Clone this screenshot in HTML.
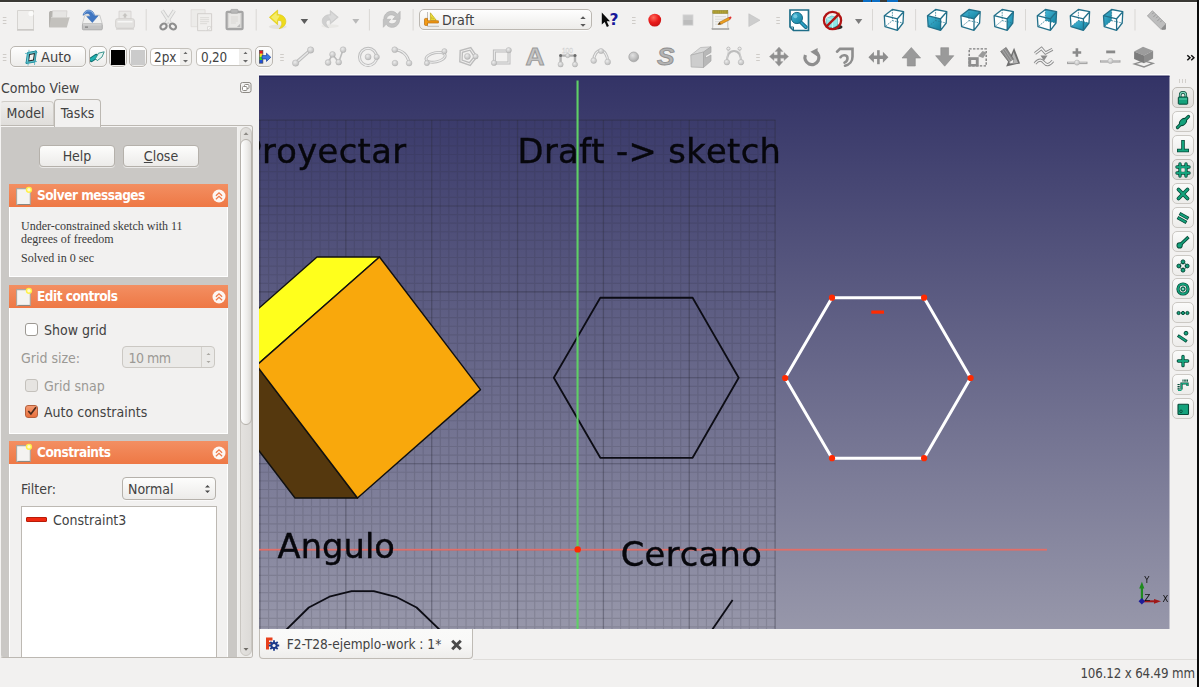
<!DOCTYPE html>
<html><head><meta charset="utf-8"><title>FreeCAD</title>
<style>
html,body{margin:0;padding:0}
body{width:1199px;height:687px;overflow:hidden;background:#f2f1f0;position:relative;font-family:"DejaVu Sans Condensed","DejaVu Sans","Liberation Sans",sans-serif;font-size:13px;color:#3c3c3c}
.abs{position:absolute}
#topbar{left:0;top:0;width:1199px;height:3px;background:linear-gradient(#3a3935 0,#3a3935 50%,#8a8986 62%,#fbfbfa 75%,#f8f7f6 100%)}
#rightedge{left:1197px;top:0;width:2px;height:687px;background:#0c0c0c}
#view{left:259px;top:75px;width:911px;height:554px;will-change:transform}
/*TBs*/
.tbtn{position:absolute;box-sizing:border-box;border:1px solid #bbb7b1;border-radius:5px;background:linear-gradient(#fefefe,#edecea);box-shadow:0 1px 0 rgba(255,255,255,.7)}
.spin{position:absolute;box-sizing:border-box;border:1px solid #c4c1bb;border-radius:4px;background:linear-gradient(90deg,#fff 0,#fff var(--w),#efeeec var(--w),#f3f2f0 100%);height:18px;top:48px}
/*TBe*/

.ui{font-family:"DejaVu Sans Condensed","DejaVu Sans","Liberation Sans",sans-serif;font-size:14px;color:#424242;white-space:nowrap;line-height:16px}
#lp{left:0;top:76px;width:259px;height:584px}
.tab{position:absolute;box-sizing:border-box;border:1px solid #b9b5af;border-bottom:none;border-radius:4px 4px 0 0;text-align:center}
#frame{position:absolute;left:0;top:49px;width:253px;height:533px;box-sizing:border-box;border:1px solid #bcb8b2;border-left-color:#f4f3f2;border-radius:0 3px 3px 3px;background:#f2f1f0;overflow:hidden}
#scroll{position:absolute;left:0;top:0;width:236px;height:531px;background:#cac8c5;overflow:hidden;box-shadow:inset 0 1px 0 #f6f5f4}
.btn{position:absolute;box-sizing:border-box;border:1px solid #b5b1ab;border-radius:4px;background:linear-gradient(#fdfdfc,#ecebe9);text-align:center;box-shadow:0 1px 0 rgba(255,255,255,.6)}
.hdr{position:absolute;left:8px;width:219px;height:23px;background:linear-gradient(#f38f62,#ee7845);color:#fff;font-weight:bold}
.hdr span{position:absolute;left:28px;top:3px;font-size:13.5px;letter-spacing:-.5px}
.box{position:absolute;left:8px;width:219px;box-sizing:border-box;background:#f2f1f0;border:1px solid #fff;border-top:none}
.chk{position:absolute;left:24px;width:13px;height:13px;box-sizing:border-box;border:1px solid #9d9993;border-radius:3px;background:#fff}
.ser{font-family:"Liberation Serif","DejaVu Serif",serif;font-size:12px;color:#3a3a3a;position:absolute;left:20px;white-space:nowrap;line-height:13px}
.lbl{position:absolute}
#scroll .lbl{margin-top:1px}


.rb{position:absolute;left:1172px;width:22px;height:21px;box-sizing:border-box;border:1px solid #cbc8c3;border-radius:5px;background:linear-gradient(#fbfbfa,#edecea)}
.rb svg{position:absolute;left:2px;top:2px}

</style></head><body>
<div id="topbar" class="abs"></div><div class="abs" style="left:863px;top:0;width:35px;height:1.500px;background:linear-gradient(90deg,#0b6ec4 0,#0b6ec4 22%,#3a3935 22%,#3a3935 26%,#0b6ec4 26%,#0b6ec4 48%,#3a3935 48%,#3a3935 68%,#0b6ec4 68%)"></div>
<!--TB1-->
<div class="tbtn" style="left:419px;top:9px;width:172.5px;height:21px"></div>
<div class="abs ui" style="left:442px;top:12px;font-size:14.2px">Draft</div>
<svg class="abs" style="left:578px;top:13px" width="10" height="16" viewBox="0 0 10 16"><path d="M2.3 6L5 3.3 7.7 6zM2.3 11L5 13.7 7.7 11z" fill="#5a5a5a"/></svg>
<div class="tbtn" style="left:10px;top:46px;width:76px;height:21px"></div>
<div class="abs ui" style="left:41px;top:49px;font-size:14.5px">Auto</div>
<svg class="abs" style="left:24px;top:48.5px" width="16" height="18" viewBox="0 0 16 18"><path d="M3.5 3.5L12.5 2 11 13 2 14.5z" fill="#7fd6de" stroke="#1f8a98" stroke-width="1"/><path d="M5.5 5.5L10.5 4.5 9.5 11 4.5 12z" fill="#f4f3f1" stroke="#222" stroke-width="1.1"/><path d="M5 .8L4 16.5M13.5 3.5L1 4.5M11.5 1L10.5 16M13 12.5L1.5 13.5" stroke="#3aa8b8" stroke-width=".7"/></svg>
<div class="tbtn" style="left:88.5px;top:46px;width:18px;height:21px"></div>
<svg class="abs" style="left:90px;top:50px" width="15" height="14" viewBox="0 0 15 14"><path d="M1.5 9.5L6 6.5" stroke="#0e6e6e" stroke-width="5" stroke-linecap="round"/><path d="M1.5 9.5L6 6.5" stroke="#1fb0b0" stroke-width="3" stroke-linecap="round"/><path d="M5.5 8.5l3-5.3 5.7-1.4-2.2 5.2-4.8 3.7z" fill="#e4f4f0" stroke="#2a8a84" stroke-width=".9"/></svg>
<div class="tbtn" style="left:109px;top:46px;width:17.5px;height:21px"></div><div class="abs" style="left:111px;top:49.5px;width:14px;height:15px;background:#000"></div>
<div class="tbtn" style="left:129px;top:46px;width:17.5px;height:21px"></div><div class="abs" style="left:131px;top:49.5px;width:14px;height:15px;background:#cbcbcb"></div>
<div class="spin" style="left:149.5px;width:42.5px;--w:29px"></div>
<div class="abs ui" style="left:154px;top:49.5px;font-size:13.4px">2px</div>
<svg class="abs" style="left:181px;top:49px" width="9" height="16" viewBox="0 0 9 16"><path d="M2.5 5L4.5 2.8 6.5 5zM2 11h5L4.5 13.6z" fill="#6a6a6a"/></svg>
<div class="spin" style="left:195.5px;width:56.5px;--w:42px"></div>
<div class="abs ui" style="left:201px;top:49.5px;font-size:13.4px;letter-spacing:-.2px">0,20</div>
<svg class="abs" style="left:241px;top:49px" width="9" height="16" viewBox="0 0 9 16"><path d="M2.5 5L4.5 2.8 6.5 5zM2 11h5L4.5 13.6z" fill="#6a6a6a"/></svg>
<div class="tbtn" style="left:255px;top:46px;width:17.5px;height:21px"></div>
<svg class="abs" style="left:258px;top:50px" width="14" height="14" viewBox="0 0 14 14"><rect x="1.3" y=".5" width="3.6" height="3.3" fill="#e81c1c"/><rect x="1.3" y="3.8" width="3.6" height="3" fill="#f4e020"/><rect x="1.3" y="6.8" width="3.6" height="3.2" fill="#28d828"/><rect x="1.3" y="10" width="3.6" height="3.2" fill="#2050d8"/><rect x="1.3" y=".5" width="3.6" height="12.7" fill="none" stroke="#444" stroke-width=".6"/><path d="M4 5.6h4.5V3.2L12.8 7.3 8.5 11.4V9H4z" fill="#3a78e0" stroke="#1a3e98" stroke-width=".7"/></svg>
<svg class="abs" style="left:0;top:0" width="1199" height="75" viewBox="0 0 1199 75"><path d="M2.8 17.5h3.6M2.8 20.5h3.6M2.8 23.5h3.6" stroke="#cfccc8" stroke-width="1"/>
<path d="M632 17.5h3.6M632 20.5h3.6M632 23.5h3.6" stroke="#cfccc8" stroke-width="1"/>
<path d="M776.3 17.5h3.6M776.3 20.5h3.6M776.3 23.5h3.6" stroke="#cfccc8" stroke-width="1"/>
<path d="M2.8 54.5h3.6M2.8 57.5h3.6M2.8 60.5h3.6" stroke="#cfccc8" stroke-width="1"/>
<path d="M280.2 54.5h3.6M280.2 57.5h3.6M280.2 60.5h3.6" stroke="#cfccc8" stroke-width="1"/>
<path d="M756.2 54.5h3.6M756.2 57.5h3.6M756.2 60.5h3.6" stroke="#cfccc8" stroke-width="1"/>
<path d="M146.2 9v21.5" stroke="#d9d7d4" stroke-width="1"/>
<path d="M256.2 9v21.5" stroke="#d9d7d4" stroke-width="1"/>
<path d="M369.4 9v21.5" stroke="#d9d7d4" stroke-width="1"/>
<path d="M413.1 9v21.5" stroke="#d9d7d4" stroke-width="1"/>
<path d="M872.5 9v21.5" stroke="#d9d7d4" stroke-width="1"/>
<path d="M915.6 9v21.5" stroke="#d9d7d4" stroke-width="1"/>
<path d="M1025.5 9v21.5" stroke="#d9d7d4" stroke-width="1"/>
<path d="M1135 9v21.5" stroke="#d9d7d4" stroke-width="1"/>
<g transform="translate(17,10)"><path d="M.5 .5h16v19H.5z" fill="#efeeec" stroke="#d6d4d1"/><path d="M0 20h17" stroke="#c4c2be" stroke-width="1.2"/><circle cx="14" cy="3.5" r="2.6" fill="#fbfbfa"/></g>
<g transform="translate(48,10)"><path d="M1 2.5l1-1.5h5l1 1.5h10V17H1z" fill="#b4b2ae"/><path d="M4.5 .8h14.5l-.8 9H4z" fill="#e6e5e3" stroke="#c9c7c4" stroke-width=".6"/><path d="M3 7.5h18.6L18.8 17.4H1.2z" fill="#c3c1bd"/><path d="M3 7.5h18.6" stroke="#d6d4d1" stroke-width=".8"/></g>
<g transform="translate(82,9.5)"><path d="M2.85 5.7H17.75L20.3 14.5H.3z" fill="#f1f1f0" stroke="#c2c2c0" stroke-width=".8"/><rect x=".4" y="14.5" width="19.9" height="5.8" rx="1" fill="#c3c3c3" stroke="#a2a2a2" stroke-width=".8"/><path d="M1 15.3h18.6" stroke="#e4e4e4" stroke-width=".8"/><path d="M3 17.6h3" stroke="#7c7c7c" stroke-width="1.2"/><path d="M1 6C1.5 2.5 4.5 .3 7 .5 10.5 .8 12.3 3.5 12.6 6.4L16.2 6.2 10.3 13.1 4.7 7 8.3 6.7C8 4.8 6.8 3.9 5.2 4 3.5 4.1 2 5 1 6z" fill="#3f76c2" stroke="#3468b0" stroke-width=".5"/><path d="M2 4.5C3.2 2.2 5.2 1.2 7 1.3 9.5 1.5 11 3 11.6 5" fill="none" stroke="#8fb4e2" stroke-width="1"/></g>
<g transform="translate(115,10.7)"><path d="M4 .5h12v8H4z" fill="#e9e8e6" stroke="#d3d1ce" stroke-width=".8"/><path d="M10 2.2l2.6 2.8h-1.4v2h-2.4v-2h-1.4z" fill="#c6c4c1"/><rect x=".6" y="8" width="18.8" height="9.5" rx="2" fill="#e3e2e0" stroke="#cfcdca" stroke-width=".8"/><path d="M2.5 11h15" stroke="#f6f6f5" stroke-width="1.6"/><path d="M1 18.3h18" stroke="#c9c7c4" stroke-width="1"/></g>
<g transform="translate(158.7,10)"><path d="M3.5 .5L11.5 13" stroke="#c9c9c9" stroke-width="3.6"/><path d="M15.5 .5L7.5 13" stroke="#c9c9c9" stroke-width="3.6"/><path d="M3.5 .5L11.5 13" stroke="#ececea" stroke-width="2.2"/><path d="M15.5 .5L7.5 13" stroke="#ececea" stroke-width="2.2"/><ellipse cx="4.8" cy="16.5" rx="3.3" ry="2.7" transform="rotate(-35 4.8 16.5)" fill="none" stroke="#8e8e8e" stroke-width="2.2"/><ellipse cx="14.2" cy="16.5" rx="3.3" ry="2.7" transform="rotate(35 14.2 16.5)" fill="none" stroke="#8e8e8e" stroke-width="2.2"/></g>
<g transform="translate(190.6,9.2)"><path d="M.5 .5h14v17H.5z" fill="#ecebe9" stroke="#dddbd8" stroke-width=".8"/><path d="M7 4.5h14v17h-3l-3-.0H7z" fill="#f0efed" stroke="#cfcdca" stroke-width=".9"/><path d="M9.5 8.5h9M9.5 10.5h9M9.5 12.5h9M9.5 14.5h7" stroke="#dcdad7" stroke-width="1"/><path d="M17 21.5l4-4h-4z" fill="#fdfdfc" stroke="#cfcdca" stroke-width=".7"/></g>
<g transform="translate(225.4,9)"><rect x="1.2" y="2.8" width="16" height="17.4" rx="1" fill="#d9d8d6" stroke="#a5a5a5" stroke-width="2.2"/><rect x="3.8" y="5" width="10.8" height="13" fill="#e9e8e6"/><path d="M5.5 8h7M5.5 10h7M5.5 12h7M5.5 14h5" stroke="#dad8d5" stroke-width="1"/><rect x="5.3" y=".4" width="7.4" height="3.8" rx="1" fill="#b8b8b8" stroke="#a0a0a0" stroke-width=".7"/><path d="M11.5 18l3.2-3.2v3.2z" fill="#bdbdbd"/></g>
<g transform="translate(269.4,10.2)"><ellipse cx="8.4" cy="16.6" rx="9" ry="2.2" fill="#e4e2df"/><path d="M0 7.1L8.2 -.1V4.3C13.5 4.3 16.4 7.5 16.4 11.5 16.4 14.8 13.5 17.5 9.8 18.5 11.8 16.5 12.6 14.5 12.4 12.6 12.2 10.8 10.8 10.1 8.2 10.1V14.5z" fill="#eedb1c" stroke="#dcc818" stroke-width=".7"/><path d="M1.6 7.1L7.3 2V5.3C8.5 5.2 9.5 5.3 10.4 5.5L8 9.3 7.3 12.3z" fill="#f6ee78" opacity=".85"/></g>
<path d="M300.6 19h7.5l-3.75 5z" fill="#5c5c5c"/>
<g transform="translate(338.3,10.6) scale(-.98,.93)"><ellipse cx="8.4" cy="16.6" rx="9" ry="2" fill="#e9e8e5"/><path d="M0 7.1L8.2 -.1V4.3C13.5 4.3 16.4 7.5 16.4 11.5 16.4 14.8 13.5 17.5 9.8 18.5 11.8 16.5 12.6 14.5 12.4 12.6 12.2 10.8 10.8 10.1 8.2 10.1V14.5z" fill="#cfcfcf" stroke="#c4c4c4" stroke-width=".6"/><path d="M1.6 7.1L7.3 2V5.3C8.5 5.2 9.5 5.3 10.4 5.5L8 9.3 7.3 12.3z" fill="#dcdcdc" opacity=".85"/></g>
<path d="M352.3 19h7l-3.5 4.7z" fill="#b9b9b9"/>
<g transform="translate(382.3,9.7) scale(1.02,1.1)"><path d="M1.5 8C2 3.5 6 1 10 1.5c2 .3 3.6 1.3 4.8 2.7L17.5 1.5V8.8h-7.3l2.5-2.5C11 4.5 7.5 4 5.5 6c-.7.7-1 1.3-1.2 2z" fill="#c3c3c3" stroke="#b2b2b2" stroke-width=".6"/><path d="M17 9.5c-.5 4.5-4.5 7-8.5 6.5-2-.3-3.6-1.3-4.8-2.7L1 16V8.7h7.3L5.8 11.2c1.7 1.8 5.2 2.3 7.2.3.7-.7 1-1.3 1.2-2z" fill="#c3c3c3" stroke="#b2b2b2" stroke-width=".6"/></g>
<g transform="translate(424,11.7)"><path d="M3.5 .3V14.6H15" fill="none" stroke="#b9b7b3" stroke-width=".9"/><path d="M6.4 1.1V8.6H12.3z" fill="#f2e23c" stroke="#b8a414" stroke-width=".7"/><path d="M7.8 5v2.4M9.2 6.3v1.1" stroke="#a89410" stroke-width=".6"/><path d="M.5 7.5C.5 6.9 1 6.7 1.5 6.7H3.5V9.1H14.4V11.3H3.5V13.7H1.5C1 13.7 .5 13.5 .5 12.9z" fill="#f39a14" stroke="#b86a08" stroke-width=".7"/></g>
<g transform="translate(601.5,12.6)"><path d="M.3 0l8.2 8.6H5.2l2.2 4.8-2 .9-2.2-4.8L.3 12z" fill="#0a0a0a"/></g>
<text x="609.6" y="25" style="font-family:'DejaVu Sans','Liberation Sans',sans-serif;font-weight:bold;font-size:15.5px;fill:#18189a">?</text>
<defs><radialGradient id="rec" cx=".4" cy=".3" r=".8"><stop offset="0" stop-color="#ff6a5a"/><stop offset=".5" stop-color="#ea1c1c"/><stop offset="1" stop-color="#c01010"/></radialGradient><linearGradient id="cf" x1="0" y1="0" x2="1" y2="1"><stop offset="0" stop-color="#46b8d8"/><stop offset="1" stop-color="#12809e"/></linearGradient><radialGradient id="ball" cx=".4" cy=".35" r=".75"><stop offset="0" stop-color="#ececec"/><stop offset=".7" stop-color="#c6c6c6"/><stop offset="1" stop-color="#a8a8a8"/></radialGradient><radialGradient id="ball2" cx=".4" cy=".35" r=".75"><stop offset="0" stop-color="#e2e2e2"/><stop offset=".6" stop-color="#bcbcbc"/><stop offset="1" stop-color="#9c9c9c"/></radialGradient></defs>
<circle cx="654.75" cy="20.1" r="6.4" fill="url(#rec)"/>
<rect x="683" y="14.9" width="10" height="10.3" fill="#c9c9c9" stroke="#d6d6d6" stroke-width=".8"/><rect x="683.5" y="20" width="9" height="4.7" fill="#bcbcbc"/>
<g transform="translate(711,10.2)"><path d="M1.8 1.5h15v15.5l1 1.8H.8l1-1.8z" fill="#f3f3f2" stroke="#b4b4b2" stroke-width=".8"/><rect x="1.8" y=".3" width="15" height="2.8" fill="#b8a838" stroke="#8e8024" stroke-width=".6"/><path d="M3.2 .3v2.8M5 .3v2.8M6.8 .3v2.8M8.6 .3v2.8M10.4 .3v2.8M12.2 .3v2.8M14 .3v2.8M15.6 .3v2.8" stroke="#8e8024" stroke-width=".5"/><path d="M4 6.5h11M4 9h11M4 11.5h11M4 14h8" stroke="#d2d2d0" stroke-width=".8"/><path d="M.8 18.8h17.4" stroke="#9a9a98" stroke-width="1.2"/><path d="M7 14.3l1.6-2.3L17.8 7.2l1.2 2.1L9.8 14.1z" fill="#f0a020" stroke="#a86808" stroke-width=".6"/><path d="M17.8 7.2l1.5-.8c.8-.3 1.6 1 .9 1.6l-1.2 1.3z" fill="#e03030"/><path d="M7 14.3l1.6-2.3 1.2 2.1z" fill="#3a3a3a"/></g>
<path d="M748.8 13.8L760 20.2l-11.2 6.3z" fill="#cdcdcd" stroke="#c0c0c0" stroke-width=".6"/>
<g transform="translate(789,9)"><path d="M1 1h18.5v20.5H4.5L1 18z" fill="#fff" stroke="#1f6e88" stroke-width="1.7"/><path d="M1 18h3.5v3.5" fill="none" stroke="#1f6e88" stroke-width="1"/><path d="M11 12.5l5.8 5.6" stroke="#176a86" stroke-width="3.8" stroke-linecap="round"/><path d="M11 12.5l5.8 5.6" stroke="#2aa0c4" stroke-width="2" stroke-linecap="round"/><circle cx="7.9" cy="9" r="5.6" fill="url(#cf)" stroke="#176a86" stroke-width="1"/><circle cx="6.3" cy="7.2" r="2" fill="#8fd8ec" opacity=".7"/></g>
<g transform="translate(822.5,10.5)"><ellipse cx="14" cy="16.5" rx="6" ry="2.5" fill="#2a2a2a"/><path d="M4 8l5-2.5 6 1.5v8l-5 2.8L4 15z" fill="#8fe6e6" stroke="#4fb8c0" stroke-width=".6"/><path d="M4 8l6 1.8 5-2.8M10 9.8v8" fill="none" stroke="#c8f6f6" stroke-width=".8"/><path d="M11 8.5L16.2 1.8l1.3 1L12.3 9.5z" fill="#f4dc3c" stroke="#b89a14" stroke-width=".4"/><circle cx="10" cy="10" r="8.6" fill="none" stroke="#b01414" stroke-width="2.3"/><path d="M3.9 16.1L16.1 3.9" stroke="#b01414" stroke-width="2.3"/></g>
<path d="M855 19h7.3l-3.65 5z" fill="#7c7c7c"/>
<g transform="translate(884,9)"><polygon points="0.3,6.7 8.4,0.5 19.6,2.7 19,14 13.4,21.4 1,17.7" fill="#fff"/><path d="M8.4 0.5V11.6L1 17.7M8.4 11.6L19 14" fill="none" stroke="#2a7892" stroke-width=".8" stroke-dasharray="1.6 1"/><path d="M0.3,6.7L8.4,0.5L19.6,2.7L13.4,9.8zM0.3,6.7L1,17.7L13.4,21.4L13.4,9.8M13.4,21.4L19,14L19.6,2.7" fill="none" stroke="#22708a" stroke-width="1.3" stroke-linejoin="round"/></g>
<g transform="translate(927.2,9)"><polygon points="0.3,6.7 8.4,0.5 19.6,2.7 19,14 13.4,21.4 1,17.7" fill="#fff"/><polygon points="0.3,6.7 13.4,9.8 13.4,21.4 1,17.7" fill="url(#cf)"/><path d="M8.4 0.5V11.6L1 17.7M8.4 11.6L19 14" fill="none" stroke="#2a7892" stroke-width=".8" stroke-dasharray="1.6 1"/><path d="M0.3,6.7L8.4,0.5L19.6,2.7L13.4,9.8zM0.3,6.7L1,17.7L13.4,21.4L13.4,9.8M13.4,21.4L19,14L19.6,2.7" fill="none" stroke="#22708a" stroke-width="1.3" stroke-linejoin="round"/></g>
<g transform="translate(960.6,9)"><polygon points="0.3,6.7 8.4,0.5 19.6,2.7 19,14 13.4,21.4 1,17.7" fill="#fff"/><polygon points="0.3,6.7 8.4,0.5 19.6,2.7 13.4,9.8" fill="url(#cf)"/><path d="M8.4 0.5V11.6L1 17.7M8.4 11.6L19 14" fill="none" stroke="#2a7892" stroke-width=".8" stroke-dasharray="1.6 1"/><path d="M0.3,6.7L8.4,0.5L19.6,2.7L13.4,9.8zM0.3,6.7L1,17.7L13.4,21.4L13.4,9.8M13.4,21.4L19,14L19.6,2.7" fill="none" stroke="#22708a" stroke-width="1.3" stroke-linejoin="round"/></g>
<g transform="translate(993.8,9)"><polygon points="0.3,6.7 8.4,0.5 19.6,2.7 19,14 13.4,21.4 1,17.7" fill="#fff"/><polygon points="13.4,9.8 19.6,2.7 19,14 13.4,21.4" fill="url(#cf)"/><path d="M8.4 0.5V11.6L1 17.7M8.4 11.6L19 14" fill="none" stroke="#2a7892" stroke-width=".8" stroke-dasharray="1.6 1"/><path d="M0.3,6.7L8.4,0.5L19.6,2.7L13.4,9.8zM0.3,6.7L1,17.7L13.4,21.4L13.4,9.8M13.4,21.4L19,14L19.6,2.7" fill="none" stroke="#22708a" stroke-width="1.3" stroke-linejoin="round"/></g>
<g transform="translate(1037,9)"><polygon points="0.3,6.7 8.4,0.5 19.6,2.7 19,14 13.4,21.4 1,17.7" fill="#fff"/><polygon points="8.4,0.5 19.6,2.7 19,14 8.4,11.6" fill="url(#cf)"/><path d="M8.4 0.5V11.6L1 17.7M8.4 11.6L19 14" fill="none" stroke="#2a7892" stroke-width=".8" stroke-dasharray="1.6 1"/><path d="M0.3,6.7L8.4,0.5L19.6,2.7L13.4,9.8zM0.3,6.7L1,17.7L13.4,21.4L13.4,9.8M13.4,21.4L19,14L19.6,2.7" fill="none" stroke="#22708a" stroke-width="1.3" stroke-linejoin="round"/></g>
<g transform="translate(1070,9)"><polygon points="0.3,6.7 8.4,0.5 19.6,2.7 19,14 13.4,21.4 1,17.7" fill="#fff"/><polygon points="1,17.7 13.4,21.4 19,14 8.4,11.6" fill="url(#cf)"/><path d="M8.4 0.5V11.6L1 17.7M8.4 11.6L19 14" fill="none" stroke="#2a7892" stroke-width=".8" stroke-dasharray="1.6 1"/><path d="M0.3,6.7L8.4,0.5L19.6,2.7L13.4,9.8zM0.3,6.7L1,17.7L13.4,21.4L13.4,9.8M13.4,21.4L19,14L19.6,2.7" fill="none" stroke="#22708a" stroke-width="1.3" stroke-linejoin="round"/></g>
<g transform="translate(1103.2,9)"><polygon points="0.3,6.7 8.4,0.5 19.6,2.7 19,14 13.4,21.4 1,17.7" fill="#fff"/><polygon points="0.3,6.7 8.4,0.5 8.4,11.6 1,17.7" fill="url(#cf)"/><path d="M8.4 0.5V11.6L1 17.7M8.4 11.6L19 14" fill="none" stroke="#2a7892" stroke-width=".8" stroke-dasharray="1.6 1"/><path d="M0.3,6.7L8.4,0.5L19.6,2.7L13.4,9.8zM0.3,6.7L1,17.7L13.4,21.4L13.4,9.8M13.4,21.4L19,14L19.6,2.7" fill="none" stroke="#22708a" stroke-width="1.3" stroke-linejoin="round"/></g>
<g transform="translate(1146.9,10.4)"><path d="M.5 5.5L5.5 .3 19 13.5v5.5l-1.8.6z" fill="#a9a9a9"/><path d="M.5 5.5L5.5 .3 19 13.5l-5 5.3z" fill="#bdbdbd" stroke="#9a9a9a" stroke-width=".6"/><path d="M14 18.8l5-5.3v5l-3.2 1.1z" fill="#8c8c8c"/><path d="M7 2l-1.7 1.8M9 4l-2.6 2.7M11 6l-1.7 1.8M13 8l-2.6 2.7M15 10l-1.7 1.8" stroke="#8a8a8a" stroke-width=".7"/></g>
<path d="M295.6 63.1L310.6 50" stroke="#bcbcbc" stroke-width="3.4"/><path d="M295.6 63.1L310.6 50" stroke="#e6e6e6" stroke-width="1.4"/><circle cx="295.6" cy="63.1" r="3.2" fill="url(#ball)" stroke="#b4b4b4" stroke-width=".5"/><circle cx="310.6" cy="50" r="3.2" fill="url(#ball)" stroke="#b4b4b4" stroke-width=".5"/>
<path d="M328.1 62.5L332.5 54.4 338.7 62.2 343.1 49.7" fill="none" stroke="#bcbcbc" stroke-width="1.6"/><circle cx="328.1" cy="62.5" r="2.9" fill="url(#ball)" stroke="#b4b4b4" stroke-width=".5"/><circle cx="332.5" cy="54.4" r="2.9" fill="url(#ball)" stroke="#b4b4b4" stroke-width=".5"/><circle cx="338.7" cy="62.2" r="2.9" fill="url(#ball)" stroke="#b4b4b4" stroke-width=".5"/><circle cx="343.1" cy="49.7" r="2.9" fill="url(#ball)" stroke="#b4b4b4" stroke-width=".5"/>
<circle cx="368.1" cy="56.9" r="8.6" fill="none" stroke="#bcbcbc" stroke-width="3"/><circle cx="368.1" cy="56.9" r="8.6" fill="none" stroke="#ededed" stroke-width="1.2"/><circle cx="368.1" cy="56.9" r="3" fill="url(#ball)" stroke="#b4b4b4" stroke-width=".5"/><circle cx="376.7" cy="56.9" r="2.7" fill="url(#ball)" stroke="#b4b4b4" stroke-width=".5"/>
<path d="M394.7 49.7C402 50 408 55 409.1 63.1" fill="none" stroke="#bcbcbc" stroke-width="3"/><path d="M394.7 49.7C402 50 408 55 409.1 63.1" fill="none" stroke="#ededed" stroke-width="1.2"/><circle cx="394.7" cy="49.7" r="2.9" fill="url(#ball)" stroke="#b4b4b4" stroke-width=".5"/><circle cx="395" cy="63.1" r="2.9" fill="url(#ball)" stroke="#b4b4b4" stroke-width=".5"/><circle cx="409.1" cy="63.1" r="2.9" fill="url(#ball)" stroke="#b4b4b4" stroke-width=".5"/>
<ellipse cx="435.6" cy="57.3" rx="9.8" ry="4.6" transform="rotate(-12 435.6 57.3)" fill="none" stroke="#bcbcbc" stroke-width="2.8"/><ellipse cx="435.6" cy="57.3" rx="9.8" ry="4.6" transform="rotate(-12 435.6 57.3)" fill="none" stroke="#ededed" stroke-width="1.1"/><circle cx="426.9" cy="63.1" r="2.6" fill="url(#ball)" stroke="#b4b4b4" stroke-width=".5"/><circle cx="444.4" cy="51.2" r="2.6" fill="url(#ball)" stroke="#b4b4b4" stroke-width=".5"/>
<polygon points="470.8,47.6 477,56.7 470.2,65.4 459.8,61.7 460.2,50.6" fill="none" stroke="#bcbcbc" stroke-width="1.4"/><polygon points="469.9,50.2 474.2,56.6 469.4,62.7 462.1,60.1 462.4,52.3" fill="none" stroke="#bcbcbc" stroke-width="1.3"/><circle cx="467.4" cy="56.4" r="3" fill="url(#ball)" stroke="#b4b4b4" stroke-width=".5"/><circle cx="475.6" cy="56.4" r="2.6" fill="url(#ball)" stroke="#b4b4b4" stroke-width=".5"/>
<rect x="494.4" y="51" width="14.6" height="12" fill="none" stroke="#bcbcbc" stroke-width="3"/><rect x="494.4" y="51" width="14.6" height="12" fill="none" stroke="#e9e9e9" stroke-width="1.1"/><circle cx="508.7" cy="50.2" r="2.7" fill="url(#ball)" stroke="#b4b4b4" stroke-width=".5"/><circle cx="494" cy="62.9" r="2.7" fill="url(#ball)" stroke="#b4b4b4" stroke-width=".5"/>
<text x="525.5" y="65.3" style="font-family:'Liberation Sans','DejaVu Sans',sans-serif;font-weight:bold;font-size:23px;fill:#c4c4c4;stroke:#9a9a9a;stroke-width:.9px" textLength="19" lengthAdjust="spacingAndGlyphs">A</text>
<path d="M560.6 64.4V55.6H575V64.4" fill="none" stroke="#b2b2b2" stroke-width="2.4"/><circle cx="560.6" cy="55.6" r="1.5" fill="#6a6a6a"/><circle cx="575" cy="55.6" r="1.5" fill="#6a6a6a"/><circle cx="560.6" cy="64.4" r="2.6" fill="url(#ball)" stroke="#b4b4b4" stroke-width=".5"/><circle cx="575" cy="64.4" r="2.6" fill="url(#ball)" stroke="#b4b4b4" stroke-width=".5"/><circle cx="567.7" cy="55.6" r="2.2" fill="url(#ball)" stroke="#b4b4b4" stroke-width=".5"/><text x="562" y="52.5" style="font-family:'Liberation Sans',sans-serif;font-size:6.5px;fill:#fafafa;stroke:#c8c8c8;stroke-width:.3px">100</text>
<path d="M593.7 60.6C594 47 607.5 47 607.7 61.9" fill="none" stroke="#bcbcbc" stroke-width="3"/><path d="M593.7 60.6C594 47 607.5 47 607.7 61.9" fill="none" stroke="#f0f0f0" stroke-width="1.1"/><circle cx="593.7" cy="60.6" r="2.9" fill="url(#ball)" stroke="#b4b4b4" stroke-width=".5"/><circle cx="601" cy="51" r="2.6" fill="url(#ball)" stroke="#b4b4b4" stroke-width=".5"/><circle cx="607.7" cy="61.9" r="2.9" fill="url(#ball)" stroke="#b4b4b4" stroke-width=".5"/>
<circle cx="633.7" cy="56.9" r="4.9" fill="url(#ball2)" stroke="#a2a2a2" stroke-width=".7"/>
<text x="657" y="64.8" style="font-family:'Liberation Sans','DejaVu Sans',sans-serif;font-style:italic;font-weight:bold;font-size:23px;fill:#b4b4b4;stroke:#8e8e8e;stroke-width:.8px" textLength="17.5" lengthAdjust="spacingAndGlyphs">S</text>
<g transform="translate(690,46)"><path d="M.8 9.2L10.5 1.5 21 .8 13.5 6z" fill="#d9d9d9" stroke="#b0b0b0" stroke-width=".7"/><path d="M.8 9.2L13.5 6v15.5L1.2 21z" fill="#cdcdcd" stroke="#b0b0b0" stroke-width=".8"/><path d="M13.5 6L21 .8v5.7l-5.5 3.2v2.3L21 9v6l-7.5 6.5z" fill="#b8b8b8" stroke="#a6a6a6" stroke-width=".7"/></g>
<path d="M726.9 62.2C727 54 730 51 734 51S741 54 741 62.2" fill="none" stroke="#bcbcbc" stroke-width="2"/><path d="M728.4 48.7L726.9 62.2M739.6 48.7L741 62.2" stroke="#cfcfcf" stroke-width=".8"/><circle cx="728.4" cy="48.7" r="1.6" fill="none" stroke="#b4b4b4" stroke-width=".9"/><circle cx="739.6" cy="48.7" r="1.6" fill="none" stroke="#b4b4b4" stroke-width=".9"/><circle cx="726.9" cy="62.2" r="2.8" fill="url(#ball)" stroke="#b4b4b4" stroke-width=".5"/><circle cx="741" cy="62.2" r="2.8" fill="url(#ball)" stroke="#b4b4b4" stroke-width=".5"/>
<g transform="translate(779,56.6)"><path d="M0-9.6l4 4.6H1.6v3.4H5V-4l4.6 4L5 4V1.6H1.6V5H4L0 9.6-4 5h2.4V1.6H-5V4l-4.6-4L-5-4v2.4h3.4V-5H-4z" fill="#8e8e8e" stroke="#a8a8a8" stroke-width=".5"/></g>
<g transform="translate(811.9,57.5)"><path d="M-6.5-2.5A7 7 0 1 0 3.5-6" fill="none" stroke="#8e8e8e" stroke-width="3.2"/><path d="M-1.5-5.8L5.8-9.5 5.2-1.2z" fill="#8e8e8e"/></g>
<g transform="translate(836,47.7)"><path d="M1 4L4 1.2h12.5V9c0 4.5-3 8-7.5 9" fill="none" stroke="#8e8e8e" stroke-width="2.6" stroke-linecap="round"/><path d="M4.5 9.5C6.5 6.5 11.5 7 11.5 10.5c0 2-1 3.5-3 4.5" fill="none" stroke="#8e8e8e" stroke-width="2.6" stroke-linecap="round"/></g>
<g transform="translate(878.4,57.2)"><path d="M-10 0l5.5-5.5v3.7h9V-5.5L10 0 4.5 5.5V1.8h-9v3.7z" fill="#8e8e8e"/><rect x="-1.3" y="-7" width="2.6" height="14" fill="#8e8e8e"/></g>
<g transform="translate(902,47.5)"><path d="M9.3 0L18.6 10.5H13.3V18.5H5.3V10.5H0z" fill="#9a9a9a" stroke="#8a8a8a" stroke-width=".6"/></g>
<g transform="translate(935.6,47.7)"><path d="M9.1 18.5L18.2 8H13V0H5.2V8H0z" fill="#9a9a9a" stroke="#8a8a8a" stroke-width=".6"/></g>
<g transform="translate(968,47.7)"><rect x="1.2" y="1.2" width="17" height="17" fill="none" stroke="#7e7e7e" stroke-width="1.4" stroke-dasharray="2.4 1.4"/><rect x=".3" y="9.5" width="10.4" height="9.3" fill="#8e8e8e"/><rect x="3.2" y="12.3" width="4.6" height="4" fill="#f2f1f0"/><path d="M10 8.5l4.5-5.3 4.2 1.5-3.5 5.5z" fill="#9a9a9a"/></g>
<g transform="translate(1000.6,46.9)"><path d="M13.5 .8L19.5 16.5 5.5 19.5z" fill="#6e6e6e"/><path d="M9 17L13 5 17.5 16z" fill="#b4b4b4"/><path d="M0 4.5L5.5 .5 13 12.5l-1 3.8-3.6-.8z" fill="#8a8a8a" stroke="#5e5e5e" stroke-width=".6"/><path d="M2 3.2l7.5 11.5M3.8 1.9l7.5 11.5" stroke="#b0b0b0" stroke-width=".7"/><path d="M8.4 15.5l3.6.8 1-3.8z" fill="#f2f1f0"/></g>
<g transform="translate(1034,47)"><path d="M1 6.5L7.5 1.5 11.5 6 18.5 2.3" fill="none" stroke="#8e8e8e" stroke-width="3.2"/><path d="M1 6.5L7.5 1.5 11.5 6 18.5 2.3" fill="none" stroke="#f4f4f4" stroke-width="1.3"/><path d="M1 16.5C5 11.5 8 13 10 15.5s5 3.5 8.8-1.5" fill="none" stroke="#8e8e8e" stroke-width="3.2"/><path d="M1 16.5C5 11.5 8 13 10 15.5s5 3.5 8.8-1.5" fill="none" stroke="#f4f4f4" stroke-width="1.3"/><path d="M6.5 8.5h7L10 13.8z" fill="#8a8a8a"/></g>
<path d="M1067 62.9H1087.5" stroke="#a6a6a6" stroke-width="2.4"/><path d="M1068 62.5H1086.5" stroke="#d0d0d0" stroke-width=".8"/><circle cx="1077" cy="62.6" r="2.6" fill="url(#ball)" stroke="#b4b4b4" stroke-width=".5"/><path d="M1076.9 48.2v8.6M1072.6 52.5h8.6" stroke="#8a8a8a" stroke-width="2.6"/>
<path d="M1100 61.4H1120.5" stroke="#a6a6a6" stroke-width="2.4"/><path d="M1101 61H1119.5" stroke="#dcdcdc" stroke-width=".8"/><circle cx="1110.4" cy="60.9" r="2.6" fill="url(#ball)" stroke="#b4b4b4" stroke-width=".5"/><path d="M1106.2 51.9h9" stroke="#8a8a8a" stroke-width="2.8"/>
<g transform="translate(1133.5,46.4)"><path d="M1 17.5L10.5 14.5 19.5 17 10.5 20.6z" fill="#f2f1f0" stroke="#8e8e8e" stroke-width="1.4"/><path d="M.6 5L9.5 .3 19.6 4.3 10.5 9z" fill="#9c9c9c"/><path d="M.6 5L10.5 9v7.8L.6 12.6z" fill="#7c7c7c"/><path d="M10.5 9L19.6 4.3v7.9l-9.1 4.6z" fill="#8c8c8c"/></g>
<path d="M1187.3 55.3l2.7 2.5-2.7 2.5M1191.2 55.3l2.7 2.5-2.7 2.5" fill="none" stroke="#111" stroke-width="1.5"/></svg><!--/TB1-->

<div id="lp" class="abs ui">
<div class="lbl" style="left:1px;top:4px">Combo View</div>
<svg class="abs" style="left:240px;top:6px" width="12" height="11" viewBox="0 0 12 11"><rect x=".5" y=".5" width="10.5" height="10" rx="2" fill="none" stroke="#8e8b86"/><rect x="4.5" y="2.5" width="4.5" height="4" rx="1" fill="#fff" stroke="#8e8b86"/><rect x="2.5" y="4.5" width="4.5" height="4" rx="1" fill="#fff" stroke="#8e8b86"/></svg>
<div class="tab" style="left:0;top:25px;width:54px;height:25px;background:linear-gradient(#eeedeb,#dfddda);padding-top:3px;padding-right:3px;border-color:#cfccc7;border-left-color:#efeeec">Model</div>
<div id="frame"><div id="scroll">
<div class="btn" style="left:38px;top:19px;width:76px;height:22px;padding-top:2px">Help</div>
<div class="btn" style="left:122px;top:19px;width:76px;height:22px;padding-top:2px"><u>C</u>lose</div>
<div class="hdr ui" style="top:58px"><svg class="abs" style="left:5.5px;top:1.5px" width="19" height="20" viewBox="0 0 18 19"><path d="M1.5 2.5h11l2 2v13h-13z" fill="#f4f3f1" stroke="#a9a6a0" stroke-width="1"/><path d="M3 17.5h11.5" stroke="#8a8781"/><circle cx="13.2" cy="3.6" r="3" fill="#fff14a"/><circle cx="13.2" cy="3.6" r="1.6" fill="#fffbd0"/></svg><span>Solver messages</span><svg class="abs" style="left:203px;top:5px" width="14" height="14" viewBox="0 0 14 14"><circle cx="7" cy="7" r="6.5" fill="#fdf6f2"/><path d="M3.9 6.7L7 3.8l3.100 2.900M3.900 10.200L7 7.300l3.100 2.900" fill="none" stroke="#ee7a48" stroke-width="1.200"/></svg></div>
<div class="box" style="top:81px;height:70px"></div>
<div class="ser" style="top:94px">Under-constrained sketch with 11</div>
<div class="ser" style="top:107px">degrees of freedom</div>
<div class="ser" style="top:126px">Solved in 0 sec</div>
<div class="hdr ui" style="top:159px"><svg class="abs" style="left:5.5px;top:1.5px" width="19" height="20" viewBox="0 0 18 19"><path d="M1.5 2.5h11l2 2v13h-13z" fill="#f4f3f1" stroke="#a9a6a0" stroke-width="1"/><path d="M3 17.5h11.5" stroke="#8a8781"/><circle cx="13.2" cy="3.6" r="3" fill="#fff14a"/><circle cx="13.2" cy="3.6" r="1.6" fill="#fffbd0"/></svg><span>Edit controls</span><svg class="abs" style="left:203px;top:5px" width="14" height="14" viewBox="0 0 14 14"><circle cx="7" cy="7" r="6.5" fill="#fdf6f2"/><path d="M3.9 6.7L7 3.8l3.100 2.900M3.900 10.200L7 7.300l3.100 2.900" fill="none" stroke="#ee7a48" stroke-width="1.200"/></svg></div>
<div class="box" style="top:182px;height:126px"></div>
<div class="chk" style="top:197px"></div><div class="lbl" style="left:43px;top:195px">Show grid</div>
<div class="lbl" style="left:20px;top:223px;color:#9b9995">Grid size:</div>
<div class="abs" style="left:121px;top:220px;width:93px;height:22px;box-sizing:border-box;border:1px solid #cbc8c3;border-radius:4px;background:#ebeae8"><div class="lbl" style="left:5.5px;top:2px;color:#9b9995;letter-spacing:-.5px">10 mm</div><div class="abs" style="left:78px;top:0;width:1px;height:20px;background:#d4d1cc"></div><svg class="abs" style="left:81px;top:4px" width="9" height="14" viewBox="0 0 9 14"><path d="M2.5 4L4.5 2l2 2zM2.5 10l2 2 2-2z" fill="#a9a6a1"/></svg></div>
<div class="chk" style="top:253px;background:#e6e4e1;border-color:#c4c1bc"></div><div class="lbl" style="left:43px;top:251px;color:#9b9995">Grid snap</div>
<div class="chk" style="top:279px;background:linear-gradient(#f39a72,#e9703c);border-color:#b5603c"><svg class="abs" style="left:0;top:-1px" width="12" height="12" viewBox="0 0 12 12"><path d="M2.3 6l2.6 3L10 2.2" fill="none" stroke="#4a2a1c" stroke-width="1.7"/></svg></div><div class="lbl" style="left:43px;top:277px">Auto constraints</div>
<div class="hdr ui" style="top:315px"><svg class="abs" style="left:5.5px;top:1.5px" width="19" height="20" viewBox="0 0 18 19"><path d="M1.5 2.5h11l2 2v13h-13z" fill="#f4f3f1" stroke="#a9a6a0" stroke-width="1"/><path d="M3 17.5h11.5" stroke="#8a8781"/><circle cx="13.2" cy="3.6" r="3" fill="#fff14a"/><circle cx="13.2" cy="3.6" r="1.6" fill="#fffbd0"/></svg><span>Constraints</span><svg class="abs" style="left:203px;top:5px" width="14" height="14" viewBox="0 0 14 14"><circle cx="7" cy="7" r="6.5" fill="#fdf6f2"/><path d="M3.9 6.7L7 3.8l3.100 2.900M3.900 10.200L7 7.300l3.100 2.900" fill="none" stroke="#ee7a48" stroke-width="1.200"/></svg></div>
<div class="box" style="top:338px;height:200px"></div>
<div class="lbl" style="left:20px;top:354px">Filter:</div>
<div class="btn" style="left:121px;top:351px;width:94px;height:23px;text-align:left"><div class="lbl" style="left:5px;top:2px">Normal</div><svg class="abs" style="left:80px;top:4px" width="9" height="14" viewBox="0 0 9 14"><path d="M2 5.5L4.5 3 7 5.5zM2 8.5L4.5 11 7 8.5z" fill="#4a4a4a"/></svg></div>
<div class="abs" style="left:20px;top:380px;width:196px;height:160px;box-sizing:border-box;border:1px solid #bdb9b3;background:#fff"><div class="abs" style="left:4px;top:10px;width:21px;height:5px;box-sizing:border-box;background:#f02810;border:1px solid #b81c08;border-radius:1px"></div><div class="lbl" style="left:31px;top:4px">Constraint3</div></div>
</div>
<div class="abs" style="left:237px;top:1px;width:15px;height:531px;background:#efeeec"></div>
<div class="abs" style="left:239px;top:1px;width:12px;height:529px;box-sizing:border-box;border:1px solid #c9c6c1;border-radius:6px;background:linear-gradient(90deg,#e4e2df,#dcdad7)"></div>
<svg class="abs" style="left:241px;top:5px" width="8" height="5" viewBox="0 0 8 5"><path d="M1.5 4L4 1.2 6.5 4z" fill="#8f8c87"/></svg>
<svg class="abs" style="left:241px;top:521px" width="8" height="5" viewBox="0 0 8 5"><path d="M1.5 1L4 3.8 6.5 1z" fill="#6f6c67"/></svg>
<div class="abs" style="left:239px;top:13px;width:12px;height:286px;box-sizing:border-box;border:1px solid #b5b1ab;border-radius:6px;background:linear-gradient(90deg,#fff,#eeedeb 60%,#dddbd8)"></div>
</div>
<div class="tab" style="left:54px;top:23px;width:47px;height:28px;background:#f2f1f0;padding-top:5px;border-color:#bcb8b2">Tasks</div>
</div>
<div class="abs" style="left:259px;top:74px;width:911px;height:1px;background:#fdfdfd"></div>
<svg id="view" class="abs" width="911" height="554" viewBox="0 0 911 554">
<defs><linearGradient id="bg" x1="0" y1="0" x2="0" y2="1"><stop offset="0" stop-color="#333366"/><stop offset="1" stop-color="#9797aa"/></linearGradient></defs>
<rect x="0" y="0.5" width="910.5" height="553.5" fill="url(#bg)"/><rect x="0" y="1" width="910.5" height="1" fill="#22215a" opacity=".75"/>
<path d="M507.51 45V554M498.93 45V554M490.35 45V554M481.76 45V554M473.18 45V554M464.59 45V554M456.00 45V554M447.42 45V554M438.84 45V554M421.66 45V554M413.08 45V554M404.50 45V554M395.91 45V554M387.33 45V554M378.74 45V554M370.15 45V554M361.57 45V554M352.99 45V554M335.82 45V554M327.23 45V554M318.64 45V554M310.06 45V554M301.48 45V554M292.89 45V554M284.31 45V554M275.72 45V554M267.13 45V554M249.96 45V554M241.38 45V554M232.80 45V554M224.21 45V554M215.62 45V554M207.04 45V554M198.45 45V554M189.87 45V554M181.28 45V554M164.12 45V554M155.53 45V554M146.94 45V554M138.36 45V554M129.77 45V554M121.19 45V554M112.60 45V554M104.02 45V554M95.44 45V554M78.26 45V554M69.68 45V554M61.09 45V554M52.51 45V554M43.92 45V554M35.34 45V554M26.75 45V554M18.17 45V554M9.58 45V554M0 466.01H516.3M0 457.42H516.3M0 448.83H516.3M0 440.24H516.3M0 431.65H516.3M0 423.06H516.3M0 414.47H516.3M0 405.88H516.3M0 397.29H516.3M0 380.11H516.3M0 371.52H516.3M0 362.93H516.3M0 354.34H516.3M0 345.75H516.3M0 337.16H516.3M0 328.57H516.3M0 319.98H516.3M0 311.39H516.3M0 294.21H516.3M0 285.62H516.3M0 277.03H516.3M0 268.44H516.3M0 259.85H516.3M0 251.26H516.3M0 242.67H516.3M0 234.08H516.3M0 225.49H516.3M0 208.31H516.3M0 199.72H516.3M0 191.13H516.3M0 182.54H516.3M0 173.95H516.3M0 165.36H516.3M0 156.77H516.3M0 148.18H516.3M0 139.59H516.3M0 122.41H516.3M0 113.82H516.3M0 105.23H516.3M0 96.64H516.3M0 88.05H516.3M0 79.46H516.3M0 70.87H516.3M0 62.28H516.3M0 53.69H516.3M0 483.19H516.3M0 491.78H516.3M0 500.37H516.3M0 508.96H516.3M0 517.55H516.3M0 526.14H516.3M0 534.73H516.3M0 543.32H516.3M0 551.91H516.3" stroke="#2c2c38" stroke-opacity=".16" stroke-width="1.15" fill="none"/>
<path d="M516.10 45V554M430.25 45V554M344.40 45V554M258.55 45V554M172.70 45V554M86.85 45V554M1.00 45V554" stroke="#2c2c3a" stroke-opacity=".36" stroke-width="1.3" fill="none"/>
<path d="M0 474.60H516.3M0 388.70H516.3M0 302.80H516.3M0 216.90H516.3M0 131.00H516.3M0 45.10H516.3" stroke="#2a2a3a" stroke-opacity=".42" stroke-width="1.1" fill="none"/>
<rect x="0" y="473.8" width="788" height="1.8" fill="#e26e68"/>
<text x="-17.8" y="87.6" style="font-family:'DejaVu Sans','Liberation Sans',sans-serif;font-size:33.7px;font-kerning:none;fill:#07070c;stroke:#07070c;stroke-width:.4px" letter-spacing="0.4">Proyectar</text>
<text x="258.6" y="87.9" style="font-family:'DejaVu Sans','Liberation Sans',sans-serif;font-size:33.7px;font-kerning:none;fill:#07070c;stroke:#07070c;stroke-width:.4px" letter-spacing="0.37">Draft -&gt; sketch</text>
<text x="18.6" y="482.7" style="font-family:'DejaVu Sans','Liberation Sans',sans-serif;font-size:33.7px;font-kerning:none;fill:#07070c;stroke:#07070c;stroke-width:.4px" letter-spacing="0.05">Angulo</text>
<text x="361.8" y="491.1" style="font-family:'DejaVu Sans','Liberation Sans',sans-serif;font-size:33.7px;font-kerning:none;fill:#07070c;stroke:#07070c;stroke-width:.4px" letter-spacing="0.3">Cercano</text>
<polygon points="58.0,182.0 120.5,182.0 -2.5,290.4 -65.0,290.4" fill="#ffff1c" stroke="#101010" stroke-width="1.4" stroke-linejoin="round"/>
<polygon points="-2.5,290.4 98.5,423.0 36.0,423.0 -65.0,290.4" fill="#55380e" stroke="#101010" stroke-width="1.4" stroke-linejoin="round"/>
<polygon points="120.5,182.0 221.5,314.6 98.5,423.0 -2.5,290.4" fill="#f9a80c" stroke="#101010" stroke-width="1.4" stroke-linejoin="round"/>
<polygon points="294.8,302.75 341.3,222.75 433.6,222.75 479.7,302.75 433.6,382.8 341.3,382.8" fill="none" stroke="#0c0c14" stroke-width="1.8" stroke-linejoin="round"/>
<polyline points="22.0,561.0 28.1,553.9 49.8,532.5 70.4,521.7 92.6,516.2 114.8,516.2 137.8,522.2 157.6,532.5 179.8,553.9 186.0,561.0" fill="none" stroke="#0c0c14" stroke-width="1.8" stroke-linejoin="round"/>
<line x1="449.5" y1="560" x2="473.6" y2="525.1" stroke="#0c0c14" stroke-width="1.8"/>
<rect x="317.5" y="5.5" width="2.1" height="548.5" fill="#5fcf66"/>
<polygon points="526.2,303.0 573.0,222.7 665.1,222.7 711.6,303.0 665.1,383.2 573.0,383.2" fill="none" stroke="#ffffff" stroke-width="3" stroke-linejoin="round"/>
<circle cx="526.2" cy="303.0" r="3.1" fill="#ff2a00"/>
<circle cx="573.0" cy="222.7" r="3.1" fill="#ff2a00"/>
<circle cx="665.1" cy="222.7" r="3.1" fill="#ff2a00"/>
<circle cx="711.6" cy="303.0" r="3.1" fill="#ff2a00"/>
<circle cx="665.1" cy="383.2" r="3.1" fill="#ff2a00"/>
<circle cx="573.0" cy="383.2" r="3.1" fill="#ff2a00"/>
<rect x="612.3" y="235.5" width="12.7" height="3.2" fill="#ff2a00"/>
<circle cx="318.7" cy="474.4" r="3.2" fill="#ff2a00"/>
<g><rect x="881.8" y="511" width="2.2" height="15.3" fill="#1e8a1e"/><polygon points="880.2,513.5 885.4,513.5 882.9,506.79999999999995" fill="#1e8a1e"/><rect x="882.8" y="525.3" width="14" height="2" fill="#a01818"/><polygon points="895,523.9 895,528.7 902,526.3" fill="#a01818"/><rect x="880.5" y="524.0" width="4.6" height="4.6" transform="rotate(45 882.8 526.3)" fill="#1c1c9a"/><text x="885.3" y="507.6" style="font-family:'DejaVu Sans',sans-serif;font-size:8.5px;fill:#111">Y</text><text x="885.6" y="526.3" style="font-family:'DejaVu Sans',sans-serif;font-size:8.5px;fill:#111">Z</text><text x="903.6" y="526.8" style="font-family:'DejaVu Sans',sans-serif;font-size:8.5px;fill:#111">X</text></g>
</svg>
<!--RTs--><div class="abs" style="left:1179px;top:79px;width:1px;height:4px;background:#d2cfcb;box-shadow:3px 0 0 #d2cfcb,6px 0 0 #d2cfcb"></div>
<div class="rb" style="top:87px;background:linear-gradient(#eeedeb,#e2e0dd);border-color:#bfbcb6"><svg width="16" height="16" viewBox="0 0 16 16"><path d="M5.2 7.5V5.2a2.8 2.8 0 0 1 5.6 0V7.5" fill="none" stroke="#074a38" stroke-width="2.6"/><path d="M5.2 7.5V5.2a2.8 2.8 0 0 1 5.6 0V7.5" fill="none" stroke="#7fd6bd" stroke-width="1.2"/><rect x="3.3" y="7" width="9.4" height="7.2" rx=".8" fill="#14a27c" stroke="#074a38"/><path d="M4 9h8" stroke="#5fcfb0" stroke-width="1"/></svg></div>
<div class="rb" style="top:111px"><svg width="16" height="16" viewBox="0 0 16 16"><path d="M2.5 13.5L13.5 2.5" stroke="#074a38" stroke-width="3.2" stroke-linecap="round"/><ellipse cx="8" cy="8" rx="4.5" ry="3.3" transform="rotate(-45 8 8)" fill="#074a38"/><path d="M2.5 13.5L13.5 2.5" stroke="#14a27c" stroke-width="1.6" stroke-linecap="round"/><ellipse cx="8" cy="8" rx="3.5" ry="2.3" transform="rotate(-45 8 8)" fill="#14a27c"/></svg></div>
<div class="rb" style="top:135px"><svg width="16" height="16" viewBox="0 0 16 16"><path d="M8 2v10M2 12.5h12" stroke="#074a38" stroke-width="3.6" stroke-linecap="butt" fill="none"/><path d="M8 2.8v9M2.8 12.5h10.4" stroke="#14a27c" stroke-width="2" fill="none"/></svg></div>
<div class="rb" style="top:159px;background:linear-gradient(#eeedeb,#e2e0dd);border-color:#bfbcb6"><svg width="16" height="16" viewBox="0 0 16 16"><path d="M5 2v12M11 2v12M2 5h12M2 11h12" stroke="#074a38" stroke-width="3.4" stroke-linecap="round"/><path d="M5 2v12M11 2v12M2 5h12M2 11h12" stroke="#14a27c" stroke-width="1.9" stroke-linecap="round"/><rect x="6.3" y="6.3" width="3.4" height="3.4" fill="#e8e6e3"/></svg></div>
<div class="rb" style="top:183px"><svg width="16" height="16" viewBox="0 0 16 16"><path d="M3.5 3.5l9 9M12.5 3.5L3.5 12.5" stroke="#074a38" stroke-width="3.8" stroke-linecap="round"/><path d="M3.5 3.5l9 9M12.5 3.5L3.5 12.5" stroke="#14a27c" stroke-width="2.2" stroke-linecap="round"/></svg></div>
<div class="rb" style="top:207px"><svg width="16" height="16" viewBox="0 0 16 16"><path d="M4.5 3.5l9 5M2.5 7.5l9 5" stroke="#074a38" stroke-width="3.4" stroke-linecap="butt"/><path d="M5.2 3.9l7.6 4.2M3.2 7.9l7.6 4.2" stroke="#14a27c" stroke-width="1.8"/></svg></div>
<div class="rb" style="top:231px"><svg width="16" height="16" viewBox="0 0 16 16"><path d="M5 11L13.5 3" stroke="#074a38" stroke-width="3.2" stroke-linecap="butt"/><circle cx="4.6" cy="11.4" r="3.1" fill="#074a38"/><path d="M5 11L13 3.5" stroke="#14a27c" stroke-width="1.7"/><circle cx="4.6" cy="11.4" r="2.2" fill="#14a27c"/></svg></div>
<div class="rb" style="top:255px"><svg width="16" height="16" viewBox="0 0 16 16"><g fill="#14a27c" stroke="#074a38" stroke-width="1"><circle cx="8" cy="3.8" r="1.9"/><circle cx="8" cy="12.2" r="1.9"/><circle cx="3.8" cy="8" r="1.9"/><circle cx="12.2" cy="8" r="1.9"/></g><path d="M5.5 5.5l5 5M10.5 5.5l-5 5" stroke="#074a38" stroke-width="1.6"/><path d="M6.2 6.2l3.6 3.6M9.8 6.2l-3.6 3.6" stroke="#f6f5f4" stroke-width="1.4"/></svg></div>
<div class="rb" style="top:278px"><svg width="16" height="16" viewBox="0 0 16 16"><circle cx="8" cy="8" r="5" fill="none" stroke="#074a38" stroke-width="3.2"/><circle cx="8" cy="8" r="5" fill="none" stroke="#14a27c" stroke-width="1.8"/><circle cx="8" cy="8" r="2.2" fill="#14a27c" stroke="#074a38" stroke-width=".9"/><circle cx="8" cy="8" r=".9" fill="#bfe9dc"/></svg></div>
<div class="rb" style="top:302px"><svg width="16" height="16" viewBox="0 0 16 16"><g fill="#14a27c" stroke="#074a38" stroke-width="1"><circle cx="3.6" cy="8" r="1.6"/><circle cx="8" cy="8" r="1.6"/><circle cx="12.4" cy="8" r="1.6"/></g></svg></div>
<div class="rb" style="top:326px"><svg width="16" height="16" viewBox="0 0 16 16"><path d="M2.8 6.5l9 6" stroke="#074a38" stroke-width="3.2"/><path d="M3.5 7l7.6 5" stroke="#14a27c" stroke-width="1.6"/><circle cx="11" cy="4.2" r="1.9" fill="#14a27c" stroke="#074a38" stroke-width="1"/></svg></div>
<div class="rb" style="top:350px"><svg width="16" height="16" viewBox="0 0 16 16"><path d="M8 3.3v9.4M3.3 8h9.4" stroke="#074a38" stroke-width="3.3" stroke-linecap="round"/><path d="M8 3.5v9M3.5 8h9" stroke="#14a27c" stroke-width="1.8" stroke-linecap="round"/></svg></div>
<div class="rb" style="top:374px"><svg width="16" height="16" viewBox="0 0 16 16"><path d="M6.5 12.5V6.5h6V9" fill="none" stroke="#074a38" stroke-width="2.2"/><path d="M6.5 12.5V6.5h6V9" fill="none" stroke="#14a27c" stroke-width="1"/><g fill="#074a38"><rect x="7.5" y="2.5" width="1" height="2.2"/><rect x="9.3" y="2.5" width="1.4" height="2.2"/><rect x="11.5" y="2.5" width="1.4" height="2.2"/><rect x="2.5" y="7" width="2.2" height="1.1"/><rect x="2.5" y="9" width="2.2" height="1.4"/><rect x="2.5" y="11.2" width="2.2" height="1.4"/></g><path d="M3 13.3h3.5" stroke="#14a27c" stroke-width="1.4"/></svg></div>
<div class="rb" style="top:398px"><svg width="16" height="16" viewBox="0 0 16 16"><rect x="3" y="3.2" width="10.5" height="10.3" rx=".8" fill="#14a27c" stroke="#074a38" stroke-width="1.1"/><circle cx="6" cy="10.3" r="1.3" fill="none" stroke="#074a38" stroke-width=".9"/></svg></div>
<!--RTe-->
<div class="abs" style="left:259px;top:629px;width:214px;height:30px;box-sizing:border-box;border:1px solid #bfbbb5;border-top:none;border-radius:0 0 4px 4px;background:linear-gradient(#fafaf9 0,#f9f9f8 45%,#eeedeb 100%)"></div>
<svg class="abs" style="left:265px;top:636px" width="15" height="15" viewBox="0 0 15 15"><path d="M1 1.5h6.5v3H4v9H1z" fill="#e8401c"/><path d="M4 6h2.5v2H4z" fill="#e8401c"/><g fill="#1c3a8a"><circle cx="9" cy="9.5" r="3.6"/><path d="M8.1 4.3h1.8v10.4H8.1zM3.8 8.6h10.4v1.8H3.8z"/><path d="M8.1 4.3h1.8v10.4H8.1zM3.8 8.6h10.4v1.8H3.8z" transform="rotate(45 9 9.5)"/></g><circle cx="9" cy="9.5" r="1.6" fill="#f4f4f4"/></svg>
<div class="abs ui" style="left:286.8px;top:635.6px;font-size:13.6px;letter-spacing:0">F2-T28-ejemplo-work : 1*</div>
<svg class="abs" style="left:450px;top:639px" width="13" height="12" viewBox="0 0 13 12"><path d="M2.2 1.8l8.6 8.4M10.8 1.8L2.2 10.2" stroke="#4a4a4a" stroke-width="3" stroke-linecap="butt"/></svg>
<div class="abs" style="left:473px;top:659px;width:724px;height:1px;background:#dfddda"></div>
<div class="abs ui" style="right:4.2px;top:666px;font-size:13.2px;letter-spacing:-.15px;color:#444">106.12 x 64.49 mm</div>
<div id="rightedge" class="abs"></div>
</body></html>
